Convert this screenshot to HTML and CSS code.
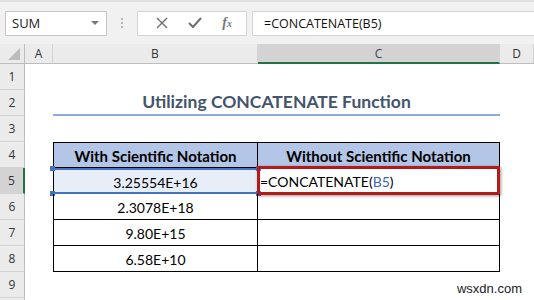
FILE: index.html
```html
<!DOCTYPE html>
<html lang="en">
<head>
    <meta charset="UTF-8">
    <meta name="viewport" content="width=device-width, initial-scale=1.0">
    <title>Utilizing CONCATENATE Function</title>
    <link rel="stylesheet" href="styles.css">
</head>
<body>
    <!-- formula bar -->
    <div class="toolbar">
        <div class="namebox">
            <span>SUM</span>
            <span class="arrow"></span>
        </div>
        <div class="grip"><i></i><i></i><i></i></div>
        <div class="fbuttons">
            <svg width="12" height="12" viewBox="0 0 12 12"><path d="M1 1 L11 11 M11 1 L1 11" stroke="#6d6d6d" stroke-width="1.4" fill="none"/></svg>
            <svg width="14" height="12" viewBox="0 0 14 12"><path d="M1 6 L5 10 L13 1" stroke="#6d6d6d" stroke-width="2" fill="none"/></svg>
            <span class="fx">f<small>x</small></span>
        </div>
        <div class="formula">=CONCATENATE(B5)</div>
    </div>

    <div class="sheet">
        <div class="hd corner"><span class="tri"></span></div>
        <div class="hd">A</div>
        <div class="hd">B</div>
        <div class="hd active-col">C</div>
        <div class="hd">D</div>

        <div class="rh">1</div><div></div><div></div><div></div><div></div>

        <div class="rh">2</div><div></div>
        <div class="title">Utilizing CONCATENATE Function</div>
        <div></div>

        <div class="rh">3</div><div></div><div></div><div></div><div></div>

        <div class="rh">4</div><div></div>
        <div class="cell th first">With Scientific Notation</div>
        <div class="cell th">Without Scientific Notation</div>
        <div></div>

        <div class="rh active-row">5</div><div></div>
        <div class="cell first ref">3.25554E+16
            <span class="dot tl"></span><span class="dot tr"></span>
            <span class="dot bl"></span><span class="dot br"></span>
        </div>
        <div class="cell editing">=CONCATENATE(<span class="blue">B5</span>)<span class="redbox"></span></div>
        <div></div>

        <div class="rh">6</div><div></div>
        <div class="cell first">2.3078E+18</div>
        <div class="cell"></div>
        <div></div>

        <div class="rh">7</div><div></div>
        <div class="cell first">9.80E+15</div>
        <div class="cell"></div>
        <div></div>

        <div class="rh">8</div><div></div>
        <div class="cell first">6.58E+10</div>
        <div class="cell"></div>
        <div></div>

        <div class="rh">9</div><div></div><div></div><div></div><div></div>
        <div class="rh"></div><div></div><div></div><div></div><div></div>
    </div>

    <div class="mark">wsxdn.com</div>
</body>
</html>
```

FILE: styles.css
```css
body {
    margin: 0;
    width: 534px;
    height: 300px;
    overflow: hidden;
    position: relative;
    background: #fff;
    font-family: Lato, sans-serif;
    color: #000;
}

/* formula bar */
.toolbar {
    height: 44px;
    box-sizing: border-box;
    background: #f1f1f1;
    border-top: 2px solid #e2e2e2;
    display: flex;
    align-items: center;
    padding: 0 0 0 5px;
}
.namebox {
    width: 102px;
    height: 25px;
    box-sizing: border-box;
    background: #fff;
    border: 1px solid #c6c6c6;
    display: flex;
    align-items: center;
    justify-content: space-between;
    padding: 0 7px 0 6px;
    font-family: "Open Sans", sans-serif;
    font-size: 13px;
    color: #222;
}
.arrow {
    border-left: 4px solid transparent;
    border-right: 4px solid transparent;
    border-top: 4px solid #777;
}
.grip {
    width: 30px;
    display: flex;
    flex-direction: column;
    align-items: center;
    gap: 2px;
}
.grip i {
    width: 2px;
    height: 2px;
    background: #b5b5b5;
}
.fbuttons {
    width: 110px;
    height: 25px;
    box-sizing: border-box;
    background: #fff;
    border: 1px solid #d4d4d4;
    display: flex;
    align-items: center;
    justify-content: space-around;
    padding: 0 4px 0 8px;
}
.fx {
    font-family: "Liberation Serif", serif;
    font-style: italic;
    font-weight: bold;
    font-size: 14px;
    color: #777;
}
.fx small {
    font-size: 10px;
}
.formula {
    flex: 1;
    height: 25px;
    margin-left: 5px;
    box-sizing: border-box;
    background: #fff;
    border: 1px solid #d4d4d4;
    border-right: none;
    display: flex;
    align-items: center;
    padding-left: 11px;
    font-family: "Open Sans", sans-serif;
    font-size: 12.5px;
    color: #111;
}

/* sheet */
.sheet {
    display: grid;
    grid-template-columns: 25px 28px 205px 242px 34px;
    grid-template-rows: 20px repeat(10, 26px);
}
.hd {
    background: #ebebeb;
    border-bottom: 1px solid #bdbdbd;
    border-right: 1px solid #d3d3d3;
    box-sizing: border-box;
    display: flex;
    align-items: center;
    justify-content: center;
    font-family: "Open Sans", sans-serif;
    font-size: 12px;
    color: #333;
}
.corner {
    position: relative;
    border-right: 1px solid #bdbdbd;
}
.tri {
    position: absolute;
    right: 4px;
    bottom: 3px;
    border-left: 12px solid transparent;
    border-bottom: 12px solid #bcbcbc;
}
.active-col {
    background: #d3d3d3;
    border-bottom: 2px solid #217346;
    color: #444;
}
.rh {
    background: #ebebeb;
    border-right: 1px solid #bdbdbd;
    border-bottom: 1px solid #d3d3d3;
    box-sizing: border-box;
    display: flex;
    align-items: center;
    justify-content: center;
    font-family: "Open Sans", sans-serif;
    font-size: 12px;
    color: #333;
}
.active-row {
    background: #d3d3d3;
    border-right: 2px solid #217346;
}

.title {
    grid-column: 3 / 5;
    box-sizing: border-box;
    border-bottom: 2px solid #8ea9db;
    display: flex;
    align-items: flex-end;
    justify-content: center;
    padding-bottom: 2px;
    font-weight: bold;
    font-size: 17.5px;
    color: #44546a;
}

.cell {
    position: relative;
    box-sizing: border-box;
    border-right: 1px solid #000;
    border-bottom: 1px solid #000;
    display: flex;
    align-items: center;
    justify-content: center;
    font-size: 14px;
    padding-top: 2px;
}
.cell.first {
    border-left: 1px solid #000;
}
.th {
    background: #b4c6e7;
    border-top: 1px solid #000;
    font-weight: bold;
    font-size: 15px;
}
.ref {
    background: #e8eef8;
    border: 2px solid #4472c4;
    border-right: 1px solid #000;
}
.dot {
    position: absolute;
    width: 5px;
    height: 5px;
    background: #4472c4;
}
.tl { left: -4px; top: -4px; }
.bl { left: -4px; bottom: -4px; }
.tr { right: -4px; top: -4px; }
.br { right: -4px; bottom: -4px; }

.editing {
    justify-content: flex-start;
    padding-left: 2px;
}
.blue {
    color: #3a66c0;
}
.redbox {
    position: absolute;
    left: -1px;
    top: -2px;
    right: -1px;
    bottom: -2px;
    border: 3px solid #b51a1a;
    box-shadow: 1px 1px 3px rgba(0, 0, 0, 0.4);
}

.mark {
    position: absolute;
    right: 12px;
    bottom: 4px;
    font-family: "Liberation Sans", sans-serif;
    font-size: 13px;
    color: #222;
}
```
